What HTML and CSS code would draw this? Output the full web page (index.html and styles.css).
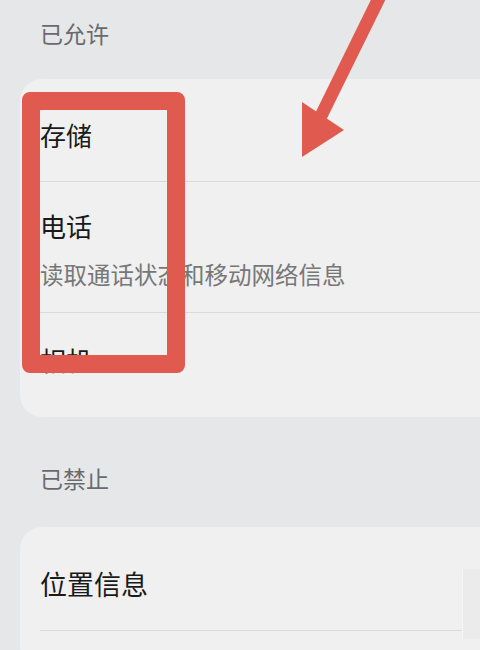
FILE: index.html
```html
<!DOCTYPE html>
<html lang="zh-CN">
<head>
    <meta charset="utf-8">
    <meta name="viewport" content="width=device-width, initial-scale=1">
    <title>应用权限</title>
    <link rel="stylesheet" href="styles.css">
</head>
<body>
    <div class="page">
        <h2 class="group-title">已允许</h2>
        <div class="card">
            <div class="row row-storage">
                <div class="row-title">存储</div>
            </div>
            <div class="row row-phone">
                <div class="row-title">电话</div>
                <div class="row-desc">读取通话状态和移动网络信息</div>
            </div>
            <div class="row row-camera">
                <div class="row-title">相机</div>
            </div>
        </div>

        <h2 class="group-title group-title-denied">已禁止</h2>
        <div class="card card-denied">
            <div class="row row-location">
                <div class="row-title">位置信息</div>
            </div>
            <div class="row-edge"></div>
        </div>

        <!-- annotation drawn on top of the list -->
        <div class="mark-box"></div>
        <svg class="mark-arrow" width="480" height="650" viewBox="0 0 480 650">
            <line x1="383" y1="-10" x2="320" y2="118" stroke="#e05a4f" stroke-width="13"/>
            <polygon points="302,157 302,102 344,130" fill="#e05a4f"/>
        </svg>
    </div>
</body>
</html>
```

FILE: styles.css
```css
* {
    margin: 0;
    padding: 0;
    box-sizing: border-box;
}

html, body {
    width: 480px;
    height: 650px;
    overflow: hidden;
}

body {
    font-family: "Noto Sans CJK SC", "Noto Sans", sans-serif;
    background: #e6e7e9;
    color: #222;
}

.page {
    position: relative;
    height: 650px;
}

.group-title {
    font-size: 23px;
    font-weight: 400;
    line-height: 28px;
    color: #6a6a6c;
    padding: 19px 0 0 40px;
    margin-bottom: 32px;
}

.group-title-denied {
    padding-top: 47px;
    margin-bottom: 35px;
}

.card {
    position: relative;
    margin-left: 20px;
    padding-left: 20px;
    background: #f0f0f0;
    border-radius: 22px 0 0 22px;
}

.row {
    border-bottom: 1px solid #dadada;
}

.row:last-child {
    border-bottom: none;
}

.row-title {
    font-size: 26px;
    line-height: 30px;
    color: #1a1a1a;
}

.row-desc {
    font-size: 23.5px;
    line-height: 28px;
    color: #777;
    margin-top: 19px;
}

.row-storage {
    padding: 41px 0 31px;
}

.row-phone {
    padding: 29px 0 24px;
}

.row-camera {
    padding: 32px 0 42px;
}

.card-denied {
    height: 140px;
}

.row-location {
    padding: 42px 0 31px;
    border-bottom: 1px solid #dadada;
}

.row-location .row-title {
    font-size: 27px;
}

.row-edge {
    position: absolute;
    right: 0;
    top: 42px;
    width: 18px;
    height: 70px;
    background: #ebebeb;
    border-left: 1px solid #f6f6f6;
}

.mark-box {
    position: absolute;
    left: 22px;
    top: 92px;
    width: 163px;
    height: 281px;
    border: 18px solid #e05a4f;
    border-radius: 8px;
}

.mark-arrow {
    position: absolute;
    left: 0;
    top: 0;
}
```
